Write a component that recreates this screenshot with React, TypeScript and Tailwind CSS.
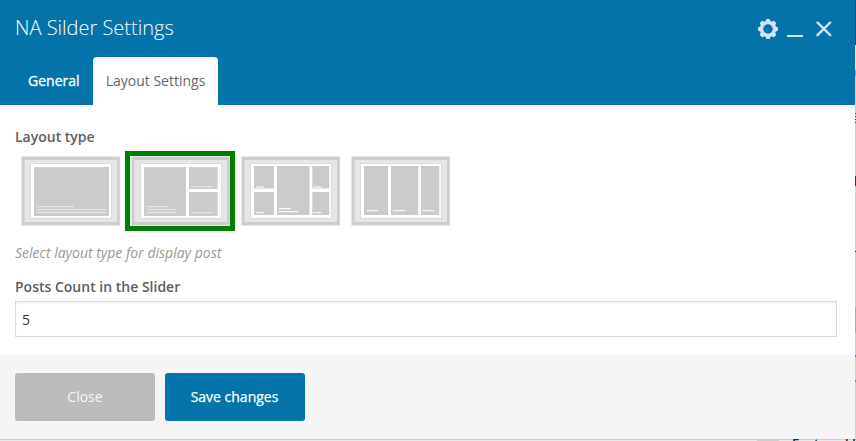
import React from "react";

type Box = [number, number, number, number];
type Line = [number, number, number];

interface Thumb {
  name: string;
  boxes: Box[];
  lines: Line[];
}

const thumbs: Thumb[] = [
  {
    name: "Full",
    boxes: [[14, 11, 75, 49]],
    lines: [[17, 50, 37], [17, 53, 69], [17, 56, 69]],
  },
  {
    name: "One and two",
    boxes: [[14, 11, 42, 49], [59, 11, 28.5, 22], [59, 36, 28.5, 24]],
    lines: [[17, 50, 21], [17, 53, 29], [17, 56, 29], [61, 30, 21], [61, 56, 22]],
  },
  {
    name: "Center",
    boxes: [[14, 10, 20, 22.5], [14, 36, 20, 23], [37, 10, 32.5, 49], [72.3, 10, 17, 22.5], [72.3, 36, 17, 23]],
    lines: [[16, 30.5, 8], [16, 56, 8], [39, 52, 12], [39, 55, 20], [73.5, 30.5, 8], [73.5, 56, 8]],
  },
  {
    name: "Columns",
    boxes: [[14, 10, 24, 49], [41, 10, 27.3, 49], [71, 10, 18.3, 49]],
    lines: [[16.3, 54, 12], [43, 54, 12], [72.3, 54, 12]],
  },
];

function LayoutThumb({ thumb, index }: { thumb: Thumb; index: number }) {
  return (
    <svg width="100" height="70" viewBox="0 0 100 70" className="block" aria-label={thumb.name}>
      <rect width="100" height="70" fill="#fbfbfb" />
      <rect x="1.6" y="0.6" width="98.2" height="68.8" fill="#cdcdcd" />
      <rect x="4.5" y="4" width="92.5" height="62" fill="#e6e6e6" />
      <rect x="10" y="7" width="82" height="56" fill="#dadada" />
      <rect x="11" y="8" width="80" height="54" fill="#fff" />
      {thumb.boxes.map(([x, y, w, h], i) => (
        <rect key={i} x={x} y={y} width={w} height={h} fill="#cbcbcb" />
      ))}
      {thumb.lines.map(([x, y, w], i) => (
        <rect key={i} x={x} y={y} width={w} height="1.2" fill={index < 2 ? "#e4e4e4" : "#f8f8f8"} />
      ))}
    </svg>
  );
}

function Gear() {
  return (
    <svg width="20" height="20" viewBox="-10 -10 20 20" className="block" fill="#cfe6f2">
      {[0, 45, 90, 135, 180, 225, 270, 315].map((a) => (
        <path key={a} d="M-3.4 -6 L-1.5 -10 H1.5 L3.4 -6Z" transform={`rotate(${a})`} />
      ))}
      <circle r="6.4" fill="none" stroke="#cfe6f2" strokeWidth="3.3" />
    </svg>
  );
}

export default function App() {
  return (
    <div className="h-[441px] w-[856px] overflow-hidden bg-[#cfcfcf] font-['Open_Sans','Noto_Sans',sans-serif] text-sm text-[#5e5e5e]">
      <div className="flex">
        <div className="flex h-[439px] w-[855px] flex-col bg-white">
          <header className="flex h-[105px] flex-col justify-between bg-[#0473aa]">
            <div className="flex items-start justify-between pt-[13px] pr-[23px] pl-[15px]">
              <h1 className="text-[20px] leading-[30px] font-light text-white">NA Silder Settings</h1>
              <div className="flex pt-[6px]">
                <Gear />
                <span className="mt-[16px] ml-[9px] block h-[2px] w-[16px] bg-[#cfe6f2]" />
                <svg width="16" height="16" viewBox="0 0 16 16" className="mt-[2px] ml-[13px]">
                  <path d="M1.5 1.5 14.2 14.2M14.2 1.5 1.5 14.2" stroke="#cfe6f2" strokeWidth="2.4" strokeLinecap="round" />
                </svg>
              </div>
            </div>
            <nav className="flex h-12 pl-[15px] leading-[48px]">
              <div className="w-[78px] pl-[13px] font-medium text-white [-webkit-text-stroke:0.3px_white]">General</div>
              <div className="w-[125px] rounded-t-[4px] bg-white text-center text-[#666]">Layout Settings</div>
            </nav>
          </header>
          <main className="flex h-[250px] flex-col pt-[22px] pr-[18px] pl-[15px]">
            <label className="leading-5 font-semibold">Layout type</label>
            <div className="mt-1 flex">
              {thumbs.map((thumb, i) => (
                <div key={thumb.name} className={`border-[5px] ${i === 1 ? "border-[#008000]" : "border-transparent"}`}>
                  <LayoutThumb thumb={thumb} index={i} />
                </div>
              ))}
            </div>
            <p className="mt-3 leading-5 text-[#999] italic">Select layout type for display post</p>
            <label className="mt-[14px] leading-5 font-semibold">Posts Count in the Slider</label>
            <div className="mt-1 h-9 w-[822px] border border-[#d9d9d9] pl-[6px] leading-[36px] text-[#333] shadow-[inset_0_1px_2px_rgba(0,0,0,0.07)]">5</div>
          </main>
          <footer className="flex h-[84px] gap-[10px] bg-[#f5f5f5] px-[15px] pt-[18px]">
            <button className="h-12 w-[140px] rounded-[3px] bg-[#bcbcbc] font-medium text-[#f6f6f6]">Close</button>
            <button className="h-12 w-[140px] rounded-[3px] bg-[#0473aa] pr-[1px] font-medium text-white [-webkit-text-stroke:0.25px_white]">Save changes</button>
          </footer>
        </div>
        <div className="flex w-px flex-col">
          <span className="h-[45px] bg-[#04588a]" />
          <span className="h-[25px] bg-[#d9e4eb]" />
          <span className="h-[6px] bg-[#6aaede]" />
          <span className="mt-[37px] h-px bg-[#5b2638]" />
          <span className="mt-[2px] h-px bg-[#5b2638]" />
          <span className="mt-[2px] h-px bg-[#5b2638]" />
          <span className="mt-[2px] h-px bg-[#5b2638]" />
          <span className="mt-[53px] h-[10px] bg-[#5b2638]" />
          <span className="mt-[65px] h-px bg-[#222]" />
          <span className="mt-[55px] h-[26px] bg-[#aaa]" />
          <span className="mt-[22px] h-[2px] bg-[#4f91b3]" />
          <span className="mt-[23px] h-[2px] bg-[#4f91b3]" />
        </div>
      </div>
      <div className="flex h-[2px] overflow-hidden bg-[#e9e9e9] shadow-[inset_0_1px_0_#cfcfcf]">
        <span className="ml-[757px] w-[22px] bg-[#cecece]" />
        <span className="-mt-[5px] ml-[13px] text-[13px] leading-[18px] font-semibold whitespace-nowrap text-[#222]">Featured I</span>
      </div>
    </div>
  );
}
